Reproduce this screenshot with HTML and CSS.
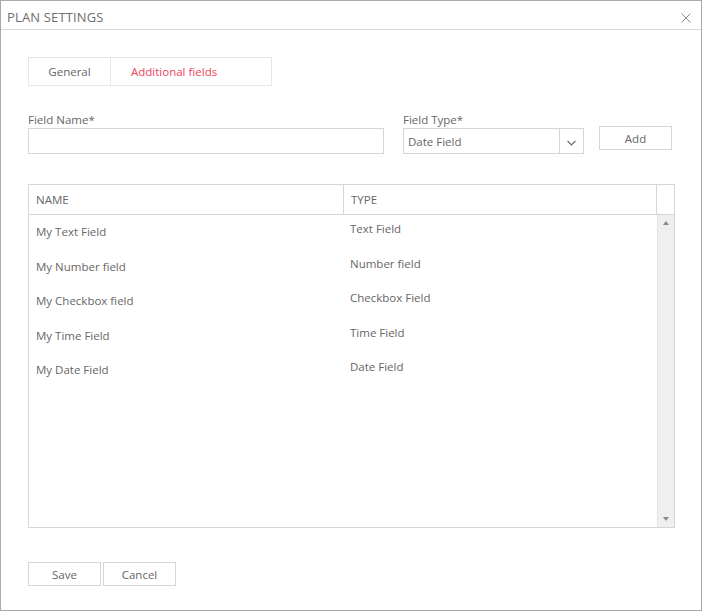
FILE: index.html
```html
<!DOCTYPE html>
<html>
<head>
<meta charset="utf-8">
<link rel="stylesheet" href="styles.css">
</head>
<body>
<div class="window">
  <div class="header">
    <span class="title">PLAN SETTINGS</span>
    <svg class="close" width="10" height="10" viewBox="0 0 10 10"><path d="M0.5 0.5L9.5 9.5M9.5 0.5L0.5 9.5" stroke="#8a8a8a" stroke-width="1" fill="none"/></svg>
  </div>
  <div class="content">
    <div class="tabs">
      <div class="tab">General</div>
      <div class="tab active">Additional fields</div>
    </div>
    <div class="form-row">
      <div class="group name-group">
        <label class="label">Field Name*</label>
        <div class="input"></div>
      </div>
      <div class="group type-group">
        <label class="label">Field Type*</label>
        <div class="select">
          <span class="select-value">Date Field</span>
          <span class="select-arrow"><svg width="9" height="6" viewBox="0 0 9 6"><path d="M0.5 0.8L4.5 4.8L8.5 0.8" stroke="#666" stroke-width="1.2" fill="none"/></svg></span>
        </div>
      </div>
      <div class="btn add">Add</div>
    </div>
    <div class="table">
      <div class="thead">
        <div class="th col-name">NAME</div>
        <div class="th col-type">TYPE</div>
        <div class="th col-scroll"></div>
      </div>
      <div class="tbody">
        <div class="rows">
          <div class="row"><div class="td col-name">My Text Field</div><div class="td col-type">Text Field</div></div>
          <div class="row"><div class="td col-name">My Number field</div><div class="td col-type">Number field</div></div>
          <div class="row"><div class="td col-name">My Checkbox field</div><div class="td col-type">Checkbox Field</div></div>
          <div class="row"><div class="td col-name">My Time Field</div><div class="td col-type">Time Field</div></div>
          <div class="row"><div class="td col-name">My Date Field</div><div class="td col-type">Date Field</div></div>
        </div>
        <div class="scrollbar">
          <span class="arrow up"></span>
          <span class="arrow down"></span>
        </div>
      </div>
    </div>
    <div class="actions">
      <div class="btn">Save</div>
      <div class="btn">Cancel</div>
    </div>
  </div>
</div>
</body>
</html>
```
FILE: styles.css
```css
* { box-sizing: border-box; }
html, body { margin: 0; padding: 0; background: #fff; }
body {
  font-family: "Open Sans", "Noto Sans", "Liberation Sans", sans-serif;
  font-size: 12px;
  color: #666;
}
.window {
  width: 702px;
  height: 611px;
  border: 1px solid #a9a9a9;
  display: flex;
  flex-direction: column;
}
.header {
  height: 29px;
  border-bottom: 1px solid #d9d9d9;
  display: flex;
  align-items: center;
  justify-content: space-between;
  padding: 4px 10px 0 6px;
}
.title {
  font-size: 13px;
  color: #6e6e6e;
  letter-spacing: 0.15px;
}
.close { display: block; margin-top: 2px; }
.content {
  padding: 27px 0 0 27px;
  display: flex;
  flex-direction: column;
}
.tabs {
  display: flex;
  width: 244px;
  height: 29px;
  border: 1px solid #e6e6e6;
}
.tab {
  width: 82px;
  border-right: 1px solid #e6e6e6;
  display: flex;
  align-items: center;
  justify-content: center;
  color: #666;
  font-size: 11.5px;
}
.tab.active {
  border-right: none;
  flex: 1;
  justify-content: flex-start;
  padding-left: 20px;
  color: #ef4358;
}
.form-row {
  display: flex;
  align-items: flex-start;
  margin-top: 26px;
}
.group { display: flex; flex-direction: column; }
.label {
  height: 16px;
  line-height: 15px;
  font-size: 11.5px;
  color: #666;
}
.input {
  width: 356px;
  height: 26px;
  border: 1px solid #d6d6d6;
}
.type-group { margin-left: 19px; }
.select {
  width: 181px;
  height: 26px;
  border: 1px solid #d6d6d6;
  display: flex;
}
.select-value {
  flex: 1;
  padding-left: 4px;
  display: flex;
  align-items: center;
  font-size: 11.5px;
}
.select-arrow {
  width: 24px;
  border-left: 1px solid #d6d6d6;
  display: flex;
  align-items: center;
  justify-content: center;
  padding-top: 3px;
}
.btn {
  width: 73px;
  height: 24px;
  border: 1px solid #d6d6d6;
  display: flex;
  align-items: center;
  justify-content: center;
  font-size: 11.5px;
  color: #666;
}
.add { margin-left: 15px; margin-top: 14px; }
.table {
  margin-top: 30px;
  width: 647px;
  height: 344px;
  border: 1px solid #d6d6d6;
  display: flex;
  flex-direction: column;
}
.thead {
  height: 30px;
  border-bottom: 1px solid #d6d6d6;
  display: flex;
}
.th {
  display: flex;
  align-items: center;
  font-size: 11.5px;
  color: #666;
}
.col-name { width: 315px; padding-left: 7px; }
.thead .col-name { border-right: 1px solid #d6d6d6; }
.col-type { width: 313px; padding-left: 7px; }
.thead .col-type { border-right: 1px solid #d6d6d6; }
.col-scroll { flex: 1; }
.tbody { flex: 1; display: flex; }
.rows { flex: 1; display: flex; flex-direction: column; }
.row { height: 34.5px; display: flex; }
.td { font-size: 11.5px; color: #666; }
.td.col-name { padding-top: 9px; }
.td.col-type { padding-top: 6px; padding-left: 6px; }
.scrollbar {
  width: 17px;
  background: #efefef;
  border-left: 1px solid #e3e3e3;
  display: flex;
  flex-direction: column;
  justify-content: space-between;
  align-items: center;
  padding: 6px 0 6px;
}
.arrow {
  width: 0;
  height: 0;
  border-left: 3.5px solid transparent;
  border-right: 3.5px solid transparent;
}
.arrow.up { border-bottom: 4px solid #8a8a8a; }
.arrow.down { border-top: 4px solid #8a8a8a; }
.actions {
  display: flex;
  gap: 2px;
  margin-top: 34px;
}
```
